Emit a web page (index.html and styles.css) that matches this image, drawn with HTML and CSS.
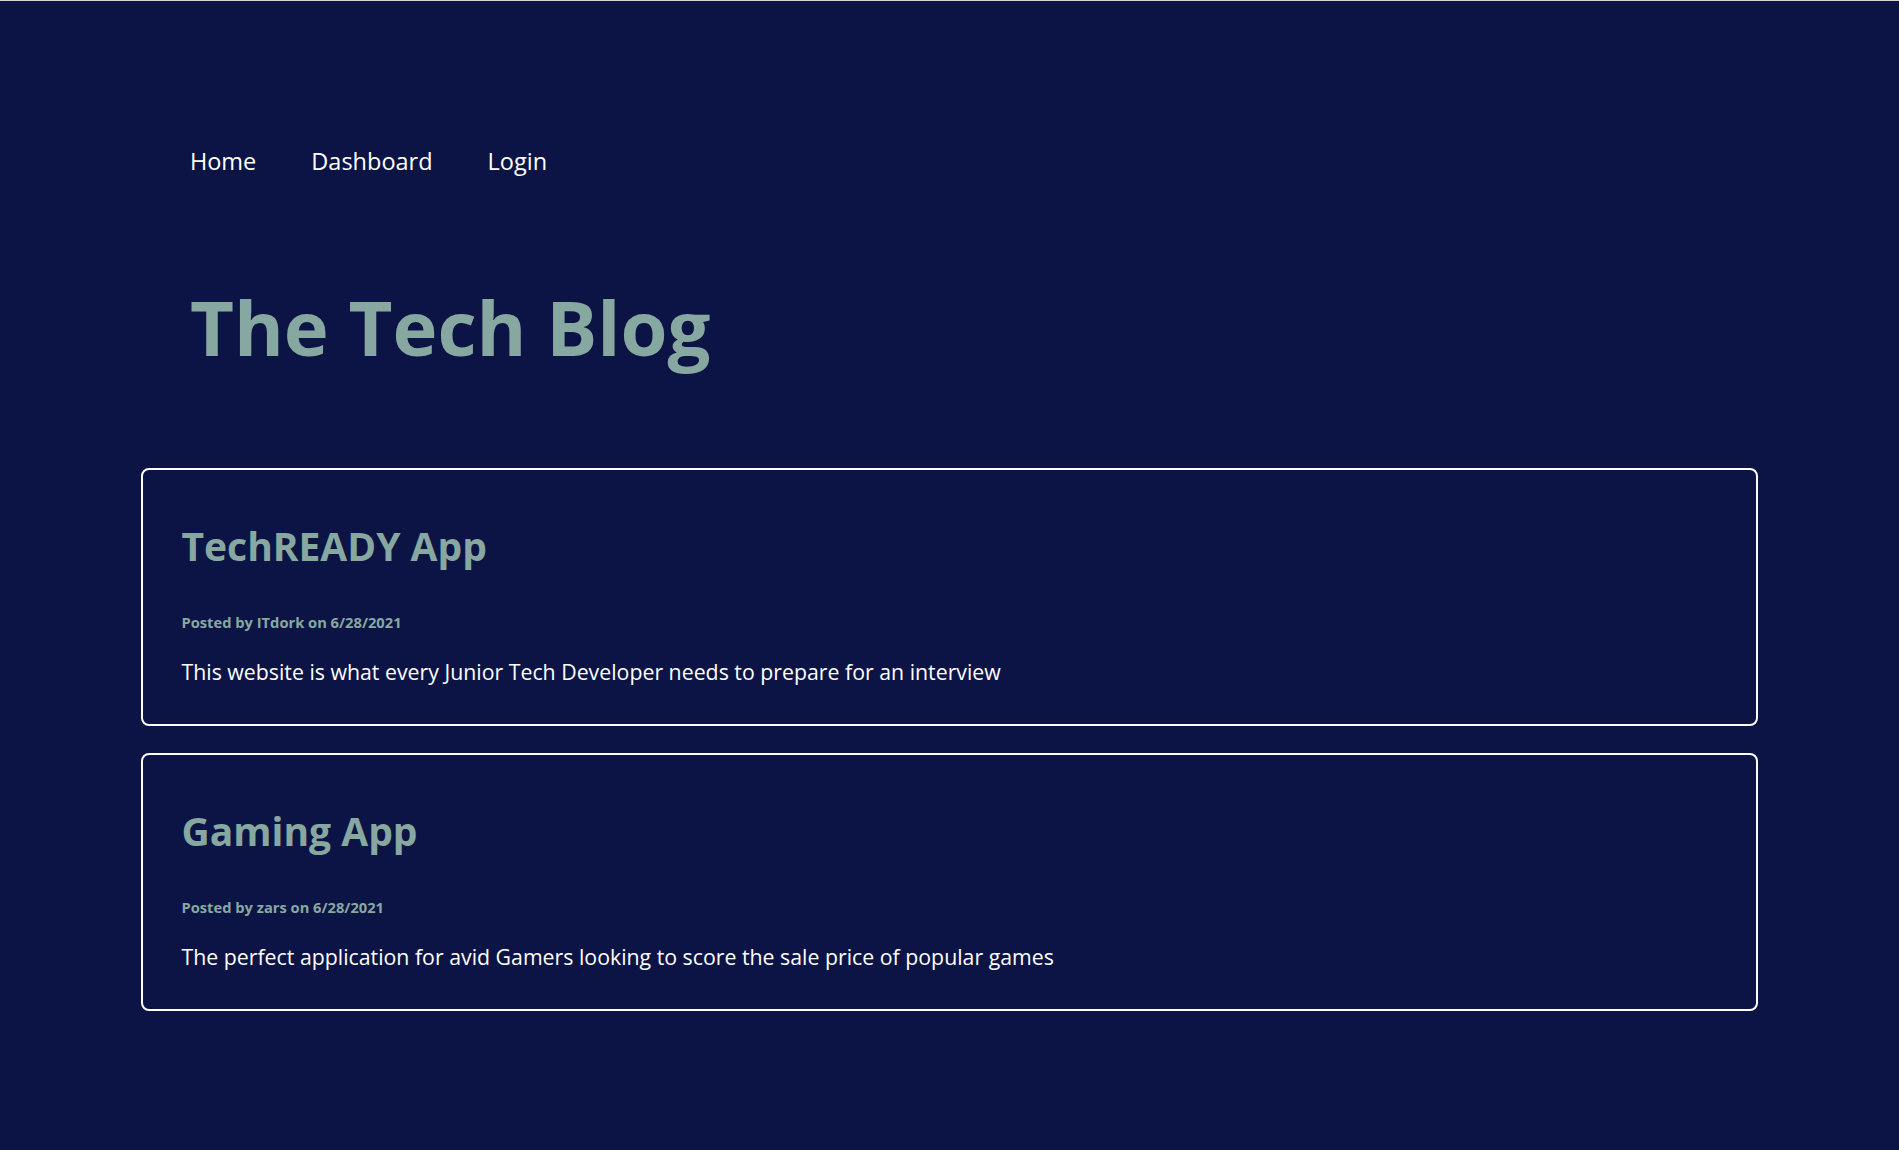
FILE: index.html
```html
<!DOCTYPE html>
<html lang="en">
<head>
<meta charset="utf-8">
<title>The Tech Blog</title>
<link rel="stylesheet" href="styles.css">
</head>
<body>
  <header class="site-header">
    <nav class="nav">
      <a class="nav-link" href="#">Home</a>
      <a class="nav-link" href="#">Dashboard</a>
      <a class="nav-link" href="#">Login</a>
    </nav>
    <h1 class="brand">The Tech Blog</h1>
  </header>
  <main class="posts">
    <article class="post">
      <h2 class="post-title">TechREADY App</h2>
      <p class="post-meta">Posted by ITdork on 6/28/2021</p>
      <p class="post-body">This website is what every Junior Tech Developer needs to prepare for an interview</p>
    </article>
    <article class="post">
      <h2 class="post-title">Gaming App</h2>
      <p class="post-meta">Posted by zars on 6/28/2021</p>
      <p class="post-body">The perfect application for avid Gamers looking to score the sale price of popular games</p>
    </article>
  </main>
</body>
</html>
```

FILE: styles.css
```css
html, body {
  margin: 0;
  padding: 0;
}

body {
  background: #0c1445;
  border-top: 1px solid #d6d6d6;
  min-height: 1149px;
  font-family: "Open Sans", "Noto Sans", "Liberation Sans", sans-serif;
  color: #ffffff;
}

.site-header {
  padding: 146px 10% 0;
}

.nav {
  display: flex;
  gap: 55px;
}

.nav-link {
  color: #ffffff;
  text-decoration: none;
  font-size: 23.5px;
  line-height: 28px;
}

.brand {
  margin: 106px 0 0;
  font-size: 76px;
  line-height: 1.2;
  font-weight: 700;
  color: #87a8a0;
}

.posts {
  width: 85.1%;
  margin: 96px auto 0;
  display: flex;
  flex-direction: column;
  gap: 27px;
}

.post {
  border: 2px solid #ffffff;
  border-radius: 8px;
  padding: 53px 38px 38px;
}

.post-title {
  margin: 0;
  font-size: 39px;
  line-height: 1.2;
  font-weight: 700;
  color: #87a8a0;
}

.post-meta {
  margin: 42px 0 0;
  font-size: 14.7px;
  line-height: 20px;
  font-weight: 700;
  color: #87a8a0;
}

.post-body {
  margin: 25px 0 0;
  font-size: 21.3px;
  line-height: 29px;
  color: #ffffff;
}
```
